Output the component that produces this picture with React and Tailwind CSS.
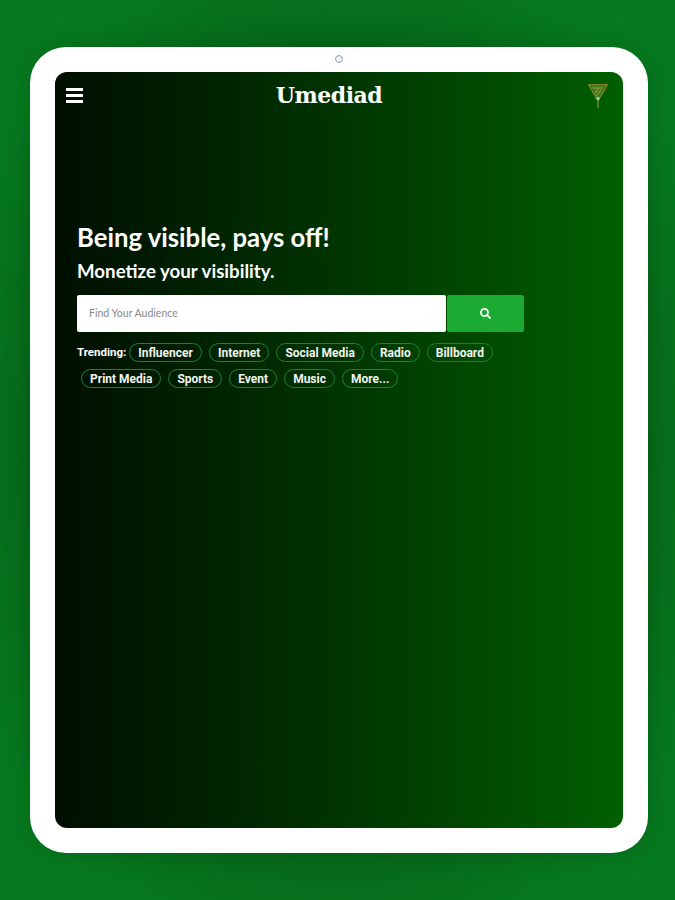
import { FaSearch } from 'react-icons/fa'

const row1 = ['Influencer', 'Internet', 'Social Media', 'Radio', 'Billboard']
const row2 = ['Print Media', 'Sports', 'Event', 'Music', 'More...']

function Tag({ label }) {
  return (
    <span className="h-[19px] px-[8px] flex items-center rounded-full border-[1.5px] border-[#1c7f3a] text-[#f2f2f2] text-[12px] font-bold leading-none font-['Roboto',sans-serif]">
      {label}
    </span>
  )
}

function Logo() {
  return (
    <svg width="22" height="26" viewBox="0 0 22 26" fill="none">
      <path d="M1.500 1.500H20.500L11 18Z" fill="#3f7a14" stroke="#7f7f2a" strokeWidth="1.200" />
      <path d="M6 5H16M8 10L12 5M9 13L14 7" stroke="#9a9a55" strokeWidth="1" />
      <circle cx="11" cy="15.500" r="1.800" fill="#6fd0a0" />
      <path d="M11 18V25" stroke="#7f8a2a" strokeWidth="1.400" />
    </svg>
  )
}

export default function App() {
  return (
    <div className="w-[675px] h-[900px] pt-[47px] pl-[30px] overflow-hidden bg-[radial-gradient(ellipse_at_center,#06681a_62%,#067a20_85%)] font-['Lato',sans-serif]">
      <div className="relative w-[618px] h-[806px] p-[25px] bg-white rounded-[36px] shadow-[0_0_24px_rgba(0,60,10,0.35)]">
        {/* Camera */}
        <div className="absolute top-[8px] left-[305px] w-[8px] h-[8px] rounded-full border border-gray-400 bg-gray-100" />

        {/* Screen */}
        <div className="h-full rounded-[12px] overflow-hidden bg-gradient-to-r from-[#000f00] to-[#006000] flex flex-col">
          <div className="h-[47px] pl-[11px] pr-[14px] flex items-center justify-between">
            <div className="flex flex-col gap-[3.500px] w-[17px]">
              <div className="h-[2.500px] bg-white" />
              <div className="h-[2.500px] bg-white" />
              <div className="h-[2.500px] bg-white" />
            </div>
            <div className="text-white text-[22px] font-bold font-['DejaVu_Serif',serif] tracking-[-0.5px] -ml-[12px]">Umediad</div>
            <Logo />
          </div>

          <div className="pl-[22px] pt-[103px]">
            <h1 className="text-white text-[25.700px] font-bold leading-[30px]">Being visible, pays off!</h1>
            <h2 className="mt-[7px] text-white text-[18.700px] font-bold leading-[24px]">Monetize your visibility.</h2>

            <div className="mt-[12px] flex gap-[1px] h-[37px] w-[447px]">
              <div className="w-[369px] pl-[12px] flex items-center bg-white rounded-[2px] text-[#888] text-[10.500px]">Find Your Audience</div>
              <button className="flex-1 flex items-center justify-center bg-[#1bab32] rounded-[2px] text-white">
                <FaSearch size={11} />
              </button>
            </div>

            <div className="mt-[11px] flex items-center gap-[7px]">
              <span className="text-white text-[11.500px] font-bold -mr-[4px] font-['Roboto',sans-serif]">Trending:</span>
              {row1.map(t => <Tag key={t} label={t} />)}
            </div>
            <div className="mt-[7px] ml-[4px] flex items-center gap-[7px]">
              {row2.map(t => <Tag key={t} label={t} />)}
            </div>
          </div>
        </div>
      </div>
    </div>
  )
}
